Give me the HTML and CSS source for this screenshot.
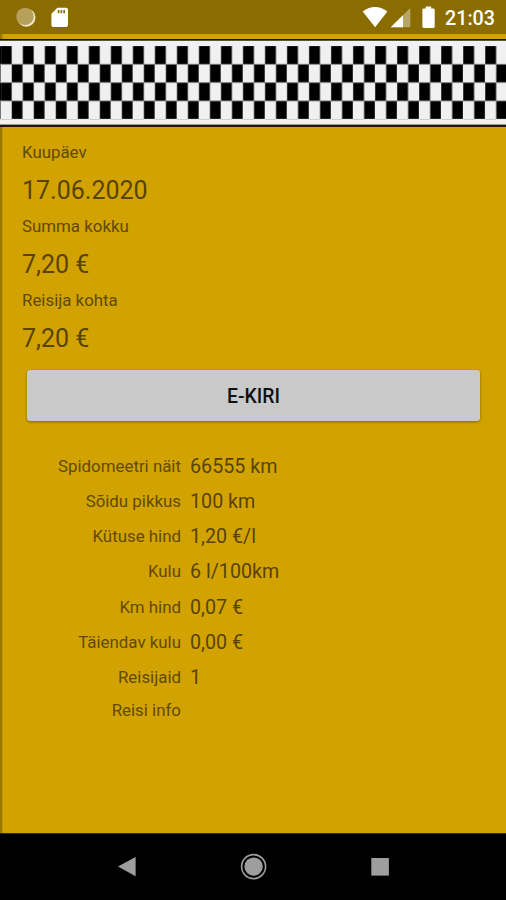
FILE: index.html
```html
<!DOCTYPE html>
<html lang="et">
<head>
<meta charset="utf-8">
<title>Reisi kulu</title>
<link rel="stylesheet" href="styles.css">
</head>
<body>
<div class="screen">
  <header class="status">
    <svg class="status-left" width="80" height="34" viewBox="0 0 80 34">
      <circle cx="26.3" cy="17.6" r="9.2" fill="#efe6c4"/>
      <circle cx="25" cy="16.4" r="8.7" fill="#b7a05a"/>
      <path d="M57.5 7.7H66q2 0 2 2V25q0 2-2 2H53.4q-2 0-2-2V13.8z" fill="#fff"/>
      <path d="M57.7 10h1.700v3.300h-1.700zM60.500 10h1.700v3.300h-1.700zM63.300 10H65v3.300h-1.700z" fill="#8b6c00"/>
    </svg>
    <svg class="status-icons" width="76" height="34" viewBox="360 0 76 34">
      <path d="M362.7 11.4Q375 2.8 387.4 11.4L375.1 27.2z" fill="#fff"/>
      <path d="M410.3 8v19.3h-19.6z" fill="#b9a666"/>
      <path d="M403 15.2v12.1h-12.3z" fill="#fff"/>
      <path d="M425.7 6.4h5.5v2.2h2.2q1.3 0 1.3 1.3V26.5q0 1.4-1.3 1.4H423.7q-1.3 0-1.3-1.4V9.9q0-1.3 1.3-1.3h2z" fill="#fff"/>
    </svg>
    <span class="clock">21:03</span>
  </header>
  <svg class="checker" width="506" height="88" viewBox="0 0 506 88">
    <defs>
      <pattern id="squares" x="0.6" y="7" width="22.02" height="36.6" patternUnits="userSpaceOnUse">
        <rect width="22.02" height="36.6" fill="#f0f0f0"/>
        <rect width="11.4" height="18.3" fill="#707070"/>
        <rect x="11" y="18.3" width="11.02" height="18.3" fill="#707070"/>
        <path d="M0 18.3H22.02" stroke="#858585"/>
        <rect x="0.5" y="0.2" width="10.2" height="17.6" fill="#000"/>
        <rect x="11.5" y="18.8" width="10.2" height="17.4" fill="#000"/>
      </pattern>
    </defs>
    <rect width="506" height="88" fill="#f1f1f3"/>
    <rect y="7" width="506" height="73.2" fill="url(#squares)"/>
    <path d="M0 43.6H506" stroke="#858585"/>
    <rect y="7.2" width="1.2" height="17.6" fill="#000"/>
    <rect y="44" width="1.2" height="17.4" fill="#000"/>
    <rect width="506" height="1.7" fill="#1b1300"/>
    <rect y="85.6" width="506" height="2.4" fill="#1d1700"/>
  </svg>
  <main class="content">
    <dl class="summary">
      <dt>Kuupäev</dt><dd>17.06.2020</dd>
      <dt>Summa kokku</dt><dd>7,20 €</dd>
      <dt>Reisija kohta</dt><dd>7,20 €</dd>
    </dl>
    <button class="send">E-KIRI</button>
    <dl class="details">
      <dt>Spidomeetri näit</dt><dd>66555 km</dd>
      <dt>Sõidu pikkus</dt><dd>100 km</dd>
      <dt>Kütuse hind</dt><dd>1,20 €/l</dd>
      <dt>Kulu</dt><dd>6 l/100km</dd>
      <dt>Km hind</dt><dd>0,07 €</dd>
      <dt>Täiendav kulu</dt><dd>0,00 €</dd>
      <dt>Reisijaid</dt><dd>1</dd>
      <dt class="info">Reisi info</dt><dd></dd>
    </dl>
  </main>
  <nav class="navbar">
    <svg width="506" height="66" viewBox="0 0 506 66">
      <g fill="#9e9e9e">
        <path d="M118 32.6L135.6 23V42.2z"/>
        <circle cx="253.6" cy="32.6" r="9.2"/>
        <circle cx="253.6" cy="32.6" r="12" fill="none" stroke="#9e9e9e" stroke-width="1.6"/>
        <rect x="371.3" y="24" width="17.6" height="17.6"/>
      </g>
    </svg>
  </nav>
</div>
</body>
</html>
```
FILE: styles.css
```css
* { box-sizing: border-box; }
body { margin: 0; font-family: Roboto, sans-serif; }
.screen {
  width: 506px;
  height: 900px;
  display: flex;
  flex-direction: column;
  background: linear-gradient(90deg, #9a7800 0, #9a7800 1.5px, #d2a300 3px);
}
.status {
  height: 34px;
  display: flex;
  align-items: center;
  background: #8b6c00;
  color: #fff;
}
.status-left { margin-right: auto; }
.clock {
  width: 61px;
  margin-left: 9px;
  padding-top: 3px;
  font-size: 19.7px;
  font-weight: 500;
  line-height: 36px;
}
.checker { display: block; margin-top: 5px; height: 88px; }
.content { flex: 1; padding: 13px 26px 0 22px; color: #614a00; }
.summary { margin: 0; }
.summary dt { height: 24px; line-height: 24px; font-size: 16.87px; }
.summary dd { height: 50px; margin: 0; padding-top: 2px; line-height: 50px; font-size: 25px; color: #584300; }
.send {
  display: block;
  width: 453px;
  height: 51px;
  margin: 8px 0 0 5px;
  padding: 2px 0 0;
  border: 0;
  border-radius: 3px;
  background: #c9c9c9;
  box-shadow: 0 1px 3px rgba(70, 50, 0, .55);
  color: #111;
  font: 500 19.4px Roboto, sans-serif;
}
.details {
  display: grid;
  grid-template-columns: 159px 1fr;
  grid-auto-rows: 35.15px;
  column-gap: 9px;
  margin: 28px 0 0;
  line-height: 35px;
}
.details dt { text-align: right; font-size: 16.87px; }
.details dd { margin: 0; font-size: 19.7px; color: #584300; }
.details .info { line-height: 31px; }
.navbar { height: 67px; border-top: 1px solid #392c00; background: #000; }
.navbar svg { display: block; }
```
